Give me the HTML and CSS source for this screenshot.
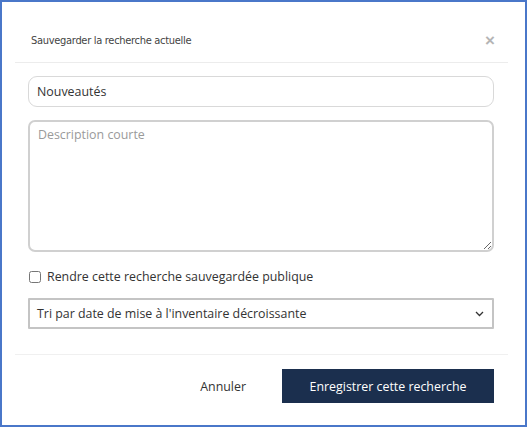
FILE: index.html
```html
<!DOCTYPE html>
<html lang="fr">
<head>
  <meta charset="UTF-8">
  <title>Sauvegarder la recherche actuelle</title>
  <link rel="stylesheet" href="styles.css">
</head>
<body>
  <div class="frame">
    <div class="modal">
      <div class="modal-header">
        <h4>Sauvegarder la recherche actuelle</h4>
        <button class="close" type="button">&times;</button>
      </div>

      <div class="modal-body">
        <input class="field" type="text" value="Nouveautés">
        <textarea class="field area" placeholder="Description courte"></textarea>
        <label class="check">
          <input type="checkbox">
          <span>Rendre cette recherche sauvegardée publique</span>
        </label>
        <div class="select">
          <span>Tri par date de mise à l'inventaire décroissante</span>
          <svg width="9" height="6" viewBox="0 0 9 6">
            <path d="M1 1 L4.5 4.5 L8 1" fill="none" stroke="#333" stroke-width="1.3"/>
          </svg>
        </div>
      </div>

      <div class="modal-footer">
        <button class="btn btn-link" type="button">Annuler</button>
        <button class="btn btn-primary" type="button">Enregistrer cette recherche</button>
      </div>
    </div>
  </div>
</body>
</html>
```

FILE: styles.css
```css
body {
  margin: 0;
  background: #fff;
  font-family: 'Open Sans', sans-serif;
  color: #333;
}

.frame {
  width: 527px;
  height: 427px;
  box-sizing: border-box;
  border: 2px solid #4a77c9;
  background: white;
}

.modal {
  margin: 0 17px 0 13px;
}

.modal-header {
  display: flex;
  align-items: center;
  justify-content: space-between;
  height: 60px;
  padding: 0 13px 0 16px;
  border-bottom: 1px solid #ececec;
}

.modal-header h4 {
  margin: 16px 0 0 0;
  font-family: 'DejaVu Sans', sans-serif;
  font-stretch: condensed;
  font-weight: normal;
  font-size: 11px;
  letter-spacing: -0.3px;
  color: #444;
}

.close {
  margin-top: 16px;
  padding: 0;
  border: none;
  background: none;
  font-family: 'Liberation Sans', sans-serif;
  font-size: 17px;
  font-weight: bold;
  color: #b5b5b5;
  line-height: 1;
}

.modal-body {
  padding: 13px 14px 25px 13px;
  display: flex;
  flex-direction: column;
}

.field {
  box-sizing: border-box;
  width: 100%;
  height: 31px;
  padding: 0 8px;
  border: 1px solid #d9d9d9;
  border-radius: 9px;
  font-family: 'Open Sans', sans-serif;
  font-size: 12.4px;
  color: #333;
  outline: none;
}

.area {
  margin-top: 13px;
  height: 132px;
  padding: 4px 8px;
  border: 2px solid #d0d0d0;
  border-radius: 7px;
  resize: vertical;
}

.area::placeholder {
  color: #9a9a9a;
}

.check {
  display: flex;
  align-items: center;
  gap: 6px;
  margin-top: 16px;
  font-size: 12.4px;
  color: #333;
}

.check input {
  margin: 0 0 0 1px;
  width: 12px;
  height: 12px;
}

.select {
  display: flex;
  align-items: center;
  justify-content: space-between;
  box-sizing: border-box;
  height: 31px;
  margin-top: 13px;
  padding: 0 8px 0 7px;
  border: 2px solid #c4c4c4;
  border-radius: 1px;
  font-size: 12.4px;
}

.modal-footer {
  display: flex;
  justify-content: flex-end;
  align-items: center;
  gap: 36px;
  padding: 14px 14px 0 0;
  border-top: 1px solid #f0f0f0;
}

.btn {
  font-family: 'Open Sans', sans-serif;
  font-size: 12.4px;
  border: none;
  cursor: pointer;
  padding: 0;
}

.btn-link {
  background: none;
  color: #333;
}

.btn-primary {
  width: 212px;
  height: 34px;
  background: #1b2f4e;
  color: white;
}
```
